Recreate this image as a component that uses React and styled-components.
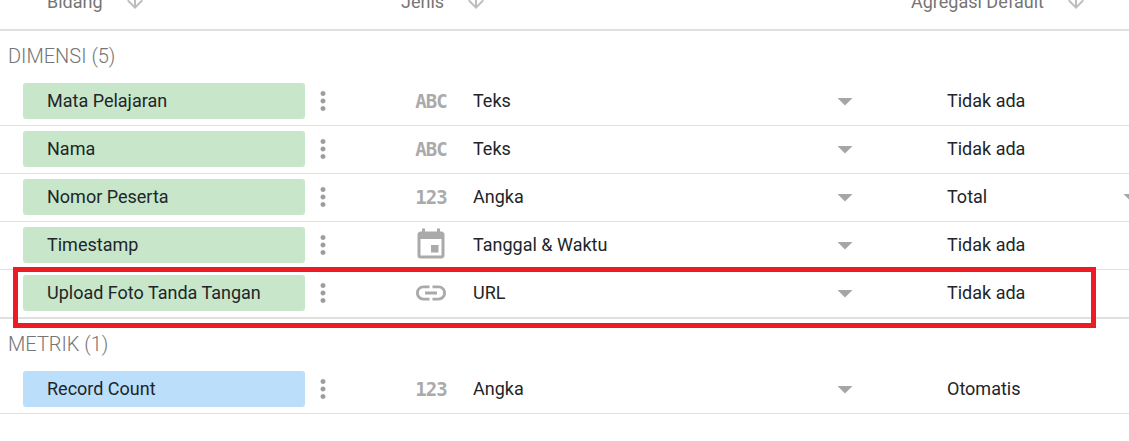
import React from "react";
import styled, { createGlobalStyle } from "styled-components";
import { MdMoreVert, MdEvent, MdLink, MdArrowDropDown, MdArrowDownward } from "react-icons/md";

const dimensions = [
  { name: "Mata Pelajaran", icon: "abc", type: "Teks", agg: "Tidak ada" },
  { name: "Nama", icon: "abc", type: "Teks", agg: "Tidak ada" },
  { name: "Nomor Peserta", icon: "123", type: "Angka", agg: "Total", aggMenu: true },
  { name: "Timestamp", icon: "date", type: "Tanggal & Waktu", agg: "Tidak ada" },
  { name: "Upload Foto Tanda Tangan", icon: "link", type: "URL", agg: "Tidak ada" },
];

const metrics = [{ name: "Record Count", icon: "123", type: "Angka", agg: "Otomatis" }];

const TypeIcon = ({ icon }) => {
  if (icon === "date") return <MdEvent size={36} color="#aaaaaa" />;
  if (icon === "link") return <MdLink size={36} color="#aaaaaa" />;
  return <GlyphIcon>{icon === "abc" ? "ABC" : "123"}</GlyphIcon>;
};

const FieldRow = ({ field, metric }) => (
  <Row>
    <Chip $metric={metric}>
      <CellText>{field.name}</CellText>
    </Chip>
    <Dots>
      <MdMoreVert size={30} color="#9e9e9e" />
    </Dots>
    <IconCell>
      <TypeIcon icon={field.icon} />
    </IconCell>
    <SelectCell>
      <CellText>{field.type}</CellText>
      <Caret>
        <MdArrowDropDown size={36} color="#a6a6a6" />
      </Caret>
    </SelectCell>
    <AggCell>
      <CellText>{field.agg}</CellText>
      {field.aggMenu && (
        <Caret>
          <MdArrowDropDown size={36} color="#a6a6a6" />
        </Caret>
      )}
    </AggCell>
  </Row>
);

const App = () => (
  <Page>
    <GlobalStyle />
    <Header>
      <HeaderCell $width="401px" $pad="47px">
        Bidang
        <MdArrowDownward size={24} color="#bdbdbd" />
      </HeaderCell>
      <HeaderCell $width="510px">
        Jenis
        <MdArrowDownward size={24} color="#bdbdbd" />
      </HeaderCell>
      <HeaderCell>
        Agregasi Default
        <MdArrowDownward size={24} color="#bdbdbd" />
      </HeaderCell>
    </Header>

    <SectionTitle>DIMENSI (5)</SectionTitle>
    {dimensions.map((field) => (
      <FieldRow key={field.name} field={field} />
    ))}
    <SectionDivider />

    <SectionTitle>METRIK (1)</SectionTitle>
    {metrics.map((field) => (
      <FieldRow key={field.name} field={field} metric />
    ))}

    <Highlight />
  </Page>
);

export default App;

const GlobalStyle = createGlobalStyle`
  html, body {
    margin: 0;
    padding: 0;
    background: #fff;
    overflow: hidden;
  }
`;

const Page = styled.div`
  position: relative;
  width: 1129px;
  height: 441px;
  overflow: hidden;
  font-family: Roboto, "Liberation Sans", sans-serif;
  font-size: 18px;
  color: #212529;
`;

const Header = styled.div`
  display: flex;
  align-items: center;
  height: 28px;
  margin-top: -13px;
  padding-bottom: 14px;
  border-bottom: 2px solid #e0e0e0;
  color: #757575;
`;

const HeaderCell = styled.div`
  display: flex;
  align-items: center;
  flex: none;
  width: ${(p) => p.$width || "auto"};
  padding-left: ${(p) => p.$pad || "0"};
  box-sizing: border-box;
  gap: 20px;
`;

const SectionTitle = styled.div`
  height: 47px;
  box-sizing: border-box;
  display: flex;
  align-items: center;
  padding: 3px 0 0 8px;
  color: #757575;
  font-size: 20px;
  font-weight: 300;
`;

const SectionDivider = styled.div`
  height: 2px;
  margin-top: -1px;
  background: #e0e0e0;
`;

const Row = styled.div`
  display: grid;
  grid-template-columns: 282px 36px 36px 380px 282px;
  align-items: center;
  height: 48px;
  padding: 0 0 1px 23px;
  box-sizing: border-box;
  border-bottom: 1px solid #e0e0e0;
`;

const Chip = styled.div`
  display: flex;
  align-items: center;
  height: 36px;
  padding-left: 24px;
  border-radius: 3px;
  background: ${(p) => (p.$metric ? "#bbdefb" : "#c8e6c9")};
`;

const CellText = styled.span`
  margin-top: -2px;
`;

const Dots = styled.div`
  display: flex;
  justify-content: center;
`;

const IconCell = styled.div`
  display: flex;
  justify-content: center;
  margin-left: 72px;
  width: 36px;
`;

const GlyphIcon = styled.span`
  font-family: "DejaVu Sans Mono", monospace;
  font-weight: 700;
  font-size: 19px;
  letter-spacing: -1px;
  color: #aaaaaa;
`;

const SelectCell = styled.div`
  display: flex;
  align-items: center;
  justify-content: space-between;
  margin-left: 96px;
  width: 380px;
`;

const AggCell = styled.div`
  display: flex;
  align-items: center;
  justify-content: space-between;
  margin-left: 190px;
  width: 192px;
`;

const Caret = styled.span`
  display: flex;
  margin-right: -10px;
`;

const Highlight = styled.div`
  position: absolute;
  left: 13px;
  top: 267px;
  width: 1083px;
  height: 61px;
  box-sizing: border-box;
  border: 5px solid #ed1c24;
`;
